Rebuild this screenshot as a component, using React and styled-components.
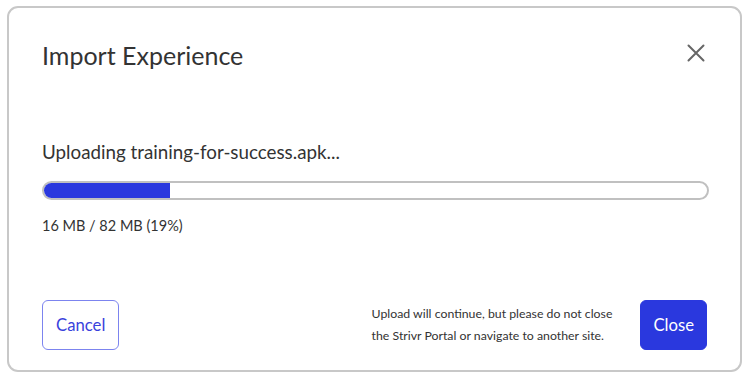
import styled, { createGlobalStyle } from "styled-components";

const GlobalStyle = createGlobalStyle`
  html, body {
    margin: 0;
    padding: 0;
    background: #ffffff;
  }
  body {
    font-family: Lato, "Noto Sans", sans-serif;
    color: #333333;
  }
`;

const Card = styled.div`
  box-sizing: border-box;
  margin: 6px 0 0 7px;
  width: 735px;
  height: 366px;
  border: 2px solid #c8c8c8;
  border-radius: 11px;
  padding: 32px 33px 20px 33px;
  display: flex;
  flex-direction: column;
`;

const Header = styled.div`
  display: flex;
  justify-content: space-between;
  align-items: flex-start;
`;

const Title = styled.h1`
  margin: 0;
  font-size: 25px;
  font-weight: 400;
  line-height: 30px;
  color: #333333;
`;

const IconButton = styled.button`
  border: none;
  background: none;
  padding: 0;
  margin: 3px 1px 0 0;
  width: 20px;
  height: 20px;
  cursor: pointer;
  color: #666666;
`;

const Body = styled.div`
  margin-top: 70px;
  flex: 1;
`;

const Status = styled.div`
  font-size: 18.8px;
  line-height: 24px;
  color: #333333;
`;

const Track = styled.div`
  box-sizing: border-box;
  margin-top: 17px;
  width: 667px;
  height: 19px;
  border: 2px solid #c0c0c0;
  border-radius: 10px;
  overflow: hidden;
`;

const Fill = styled.div`
  height: 100%;
  background: #2a38de;
`;

const Progress = styled.div`
  margin-top: 16px;
  font-size: 14.5px;
  line-height: 20px;
  color: #333333;
`;

const Footer = styled.div`
  display: flex;
  align-items: center;
  justify-content: space-between;
`;

const Right = styled.div`
  display: flex;
  align-items: center;
  gap: 28px;
`;

const Note = styled.p`
  margin: 0;
  font-size: 12.3px;
  line-height: 22px;
  color: #333333;
`;

const Button = styled.button`
  box-sizing: border-box;
  height: 50px;
  padding: 0 ${(p) => (p.$primary ? "12px" : "13px")};
  border-radius: 6px;
  font-family: Lato, "Noto Sans", sans-serif;
  font-size: 16.7px;
  cursor: pointer;
  border: 1px solid ${(p) => (p.$primary ? "#2a38de" : "#7c84ef")};
  background: ${(p) => (p.$primary ? "#2a38de" : "#ffffff")};
  color: ${(p) => (p.$primary ? "#ffffff" : "#3942dc")};
`;

export default function App() {
  const loaded = 16;
  const total = 82;
  const pct = 19;
  return (
    <>
      <GlobalStyle />
      <Card>
        <Header>
          <Title>Import Experience</Title>
          <IconButton aria-label="Close">
            <svg width="20" height="20" viewBox="0 0 20 20">
              <path
                d="M2.5 2.5 L17.5 17.5 M17.5 2.5 L2.5 17.5"
                stroke="currentColor"
                strokeWidth="2"
                strokeLinecap="round"
              />
            </svg>
          </IconButton>
        </Header>
        <Body>
          <Status>Uploading training-for-success.apk...</Status>
          <Track>
            <Fill style={{ width: `${pct}%` }} />
          </Track>
          <Progress>
            {loaded} MB / {total} MB ({pct}%)
          </Progress>
        </Body>
        <Footer>
          <Button>Cancel</Button>
          <Right>
            <Note>
              Upload will continue, but please do not close
              <br />
              the Strivr Portal or navigate to another site.
            </Note>
            <Button $primary>Close</Button>
          </Right>
        </Footer>
      </Card>
    </>
  );
}
